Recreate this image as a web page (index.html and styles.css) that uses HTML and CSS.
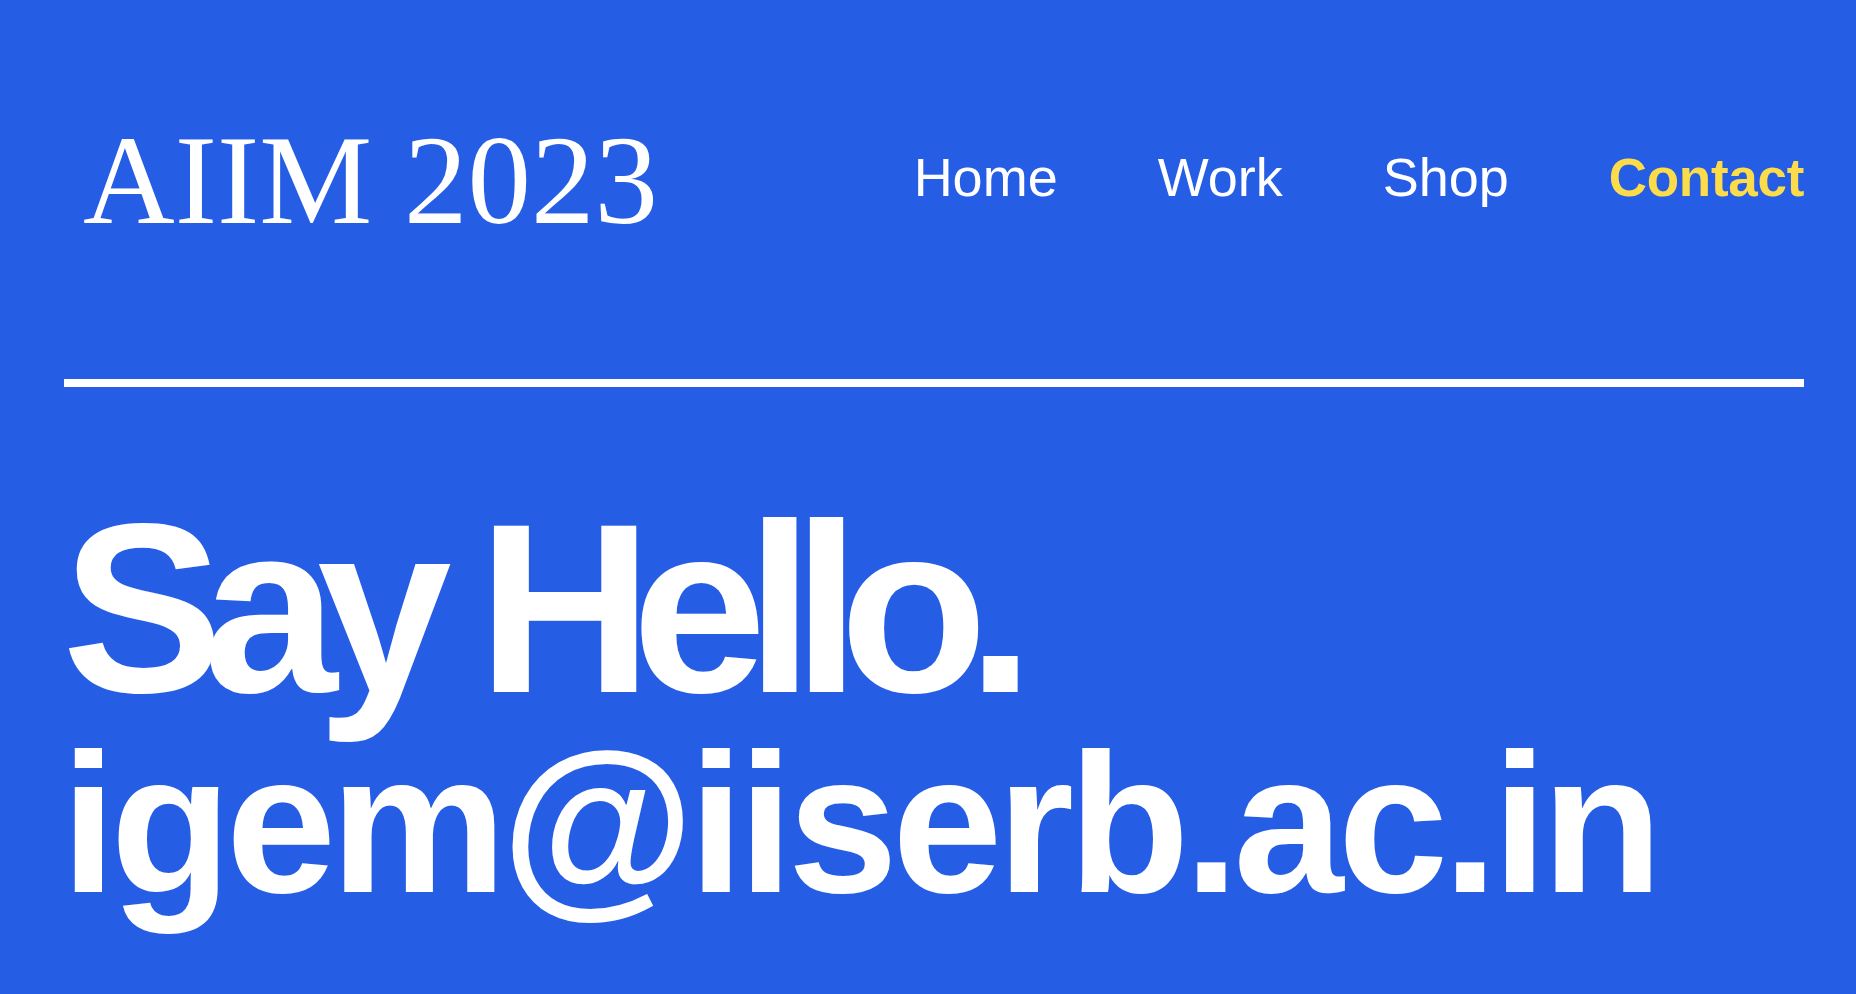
FILE: index.html
```html
<!DOCTYPE html>
<html lang="en">
<head>
<meta charset="utf-8">
<title>AIIM 2023 — Contact</title>
<link rel="stylesheet" href="styles.css">
</head>
<body>
<div class="page">
  <header class="header">
    <div class="logo">AIIM 2023</div>
    <nav class="nav">
      <a class="nav-link" href="#">Home</a>
      <a class="nav-link" href="#">Work</a>
      <a class="nav-link" href="#">Shop</a>
      <a class="nav-link nav-link--active" href="#">Contact</a>
    </nav>
  </header>
  <hr class="rule">
  <main class="contact">
    <h1 class="contact-title">Say Hello.</h1>
    <p class="contact-email">igem@iiserb.ac.in</p>
  </main>
</div>
</body>
</html>
```

FILE: styles.css
```css
html, body {
  margin: 0;
  padding: 0;
}

body {
  background: #265de5;
  color: #ffffff;
  font-family: "Liberation Sans", Arial, sans-serif;
  height: 994px;
  overflow: hidden;
}

.page {
  padding: 0 52px 0 64px;
}

.header {
  display: flex;
  justify-content: space-between;
  align-items: flex-start;
  padding-top: 117px;
}

.logo {
  font-family: "Liberation Serif", "Times New Roman", serif;
  font-size: 127px;
  line-height: 1;
  margin-left: 19px;
  white-space: nowrap;
}

.nav {
  display: flex;
  gap: 100px;
  margin-top: 33px;
}

.nav-link {
  color: #ffffff;
  text-decoration: none;
  font-size: 54px;
  line-height: 1;
}

.nav-link--active {
  color: #fcdc4a;
  font-weight: 700;
  font-size: 53px;
  letter-spacing: -0.3px;
  margin-top: 1px;
}

.rule {
  border: 0;
  height: 8px;
  background: #ffffff;
  margin: 135px 0 0 0;
}

.contact {
  margin-top: 100px;
}

.contact-title {
  margin: 0 0 0 -2px;
  font-size: 242px;
  font-weight: 700;
  line-height: 1;
  letter-spacing: -20.5px;
  white-space: nowrap;
}

.contact-email {
  margin: -4px 0 0 -3px;
  font-size: 198px;
  font-weight: 700;
  line-height: 1;
  letter-spacing: -5.5px;
  white-space: nowrap;
}
```
